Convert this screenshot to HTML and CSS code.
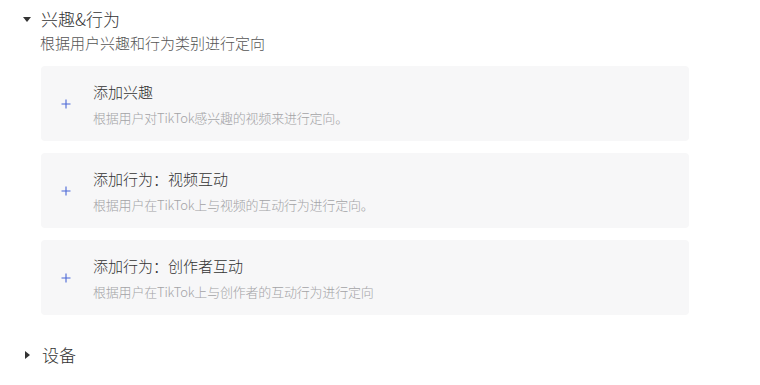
FILE: index.html
```html
<!DOCTYPE html>
<html lang="zh">
<head>
<meta charset="utf-8">
<link rel="stylesheet" href="styles.css">
</head>
<body>
<div class="page">
  <section class="group">
    <div class="group-head">
      <span class="caret caret-down"></span>
      <span class="group-title">兴趣&amp;行为</span>
    </div>
    <div class="group-desc">根据用户兴趣和行为类别进行定向</div>
    <div class="cards">
      <div class="card">
        <span class="plus"><svg width="10" height="10" viewBox="0 0 10 10"><path d="M5 0.5V9.5M0.5 5H9.5" stroke="#4a67d6" stroke-width="1.1" fill="none"/></svg></span>
        <div class="card-body">
          <div class="card-title">添加兴趣</div>
          <div class="card-desc">根据用户对TikTok感兴趣的视频来进行定向。</div>
        </div>
      </div>
      <div class="card">
        <span class="plus"><svg width="10" height="10" viewBox="0 0 10 10"><path d="M5 0.5V9.5M0.5 5H9.5" stroke="#4a67d6" stroke-width="1.1" fill="none"/></svg></span>
        <div class="card-body">
          <div class="card-title">添加行为：视频互动</div>
          <div class="card-desc">根据用户在TikTok上与视频的互动行为进行定向。</div>
        </div>
      </div>
      <div class="card">
        <span class="plus"><svg width="10" height="10" viewBox="0 0 10 10"><path d="M5 0.5V9.5M0.5 5H9.5" stroke="#4a67d6" stroke-width="1.1" fill="none"/></svg></span>
        <div class="card-body">
          <div class="card-title">添加行为：创作者互动</div>
          <div class="card-desc">根据用户在TikTok上与创作者的互动行为进行定向</div>
        </div>
      </div>
    </div>
  </section>
  <section class="group collapsed">
    <div class="group-head">
      <span class="caret caret-right"></span>
      <span class="group-title">设备</span>
    </div>
  </section>
</div>
</body>
</html>
```
FILE: styles.css
```css
html, body {
  margin: 0;
  padding: 0;
  background: #ffffff;
}
body {
  font-family: "Noto Sans CJK SC", "Noto Sans", sans-serif;
  font-weight: 300;
  color: #333;
}
.page {
  padding: 6px 0 0 23px;
}
.group-head {
  display: flex;
  align-items: center;
  height: 26px;
}
.caret {
  display: inline-block;
  width: 0;
  height: 0;
}
.caret-down {
  border-left: 4px solid transparent;
  border-right: 4px solid transparent;
  border-top: 5px solid #333;
  margin-right: 10px;
}
.caret-right {
  border-top: 4px solid transparent;
  border-bottom: 4px solid transparent;
  border-left: 5px solid #333;
  margin: 0 12px 0 2px;
}
.group-title {
  font-size: 17px;
  line-height: 26px;
  color: #333;
}
.group-desc {
  margin-left: 17px;
  font-size: 15px;
  line-height: 22px;
  color: #555;
}
.cards {
  margin: 12px 0 0 18px;
  width: 648px;
  display: flex;
  flex-direction: column;
  gap: 12px;
}
.card {
  height: 75px;
  box-sizing: border-box;
  background: #f7f7f8;
  border-radius: 4px;
  display: flex;
  align-items: center;
}
.plus {
  width: 10px;
  height: 10px;
  margin: 0 22px 0 20px;
  display: flex;
}
.card-body {
  display: flex;
  flex-direction: column;
  padding-top: 2px;
}
.card-title {
  font-size: 15px;
  line-height: 20px;
  color: #333;
}
.card-desc {
  margin-top: 7px;
  font-size: 13px;
  line-height: 18px;
  color: #a3a3a6;
  letter-spacing: -0.2px;
}
.collapsed {
  margin-top: 27px;
}
```
